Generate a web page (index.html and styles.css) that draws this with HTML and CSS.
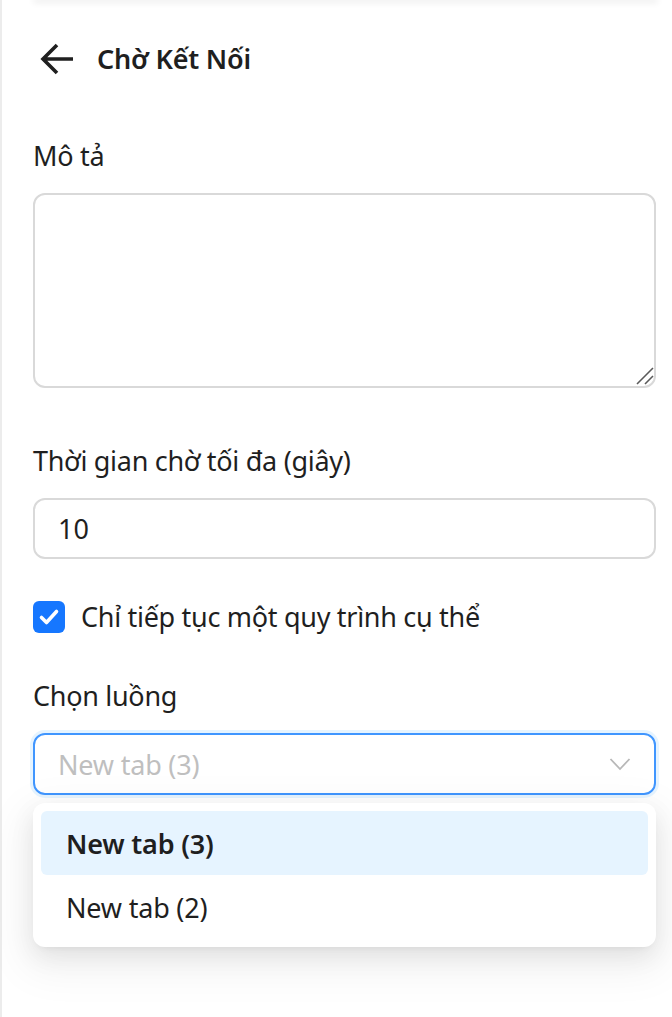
FILE: index.html
```html
<!DOCTYPE html>
<html lang="vi">
<head>
<meta charset="utf-8">
<title>Chờ Kết Nối</title>
<link rel="stylesheet" href="styles.css">
</head>
<body>
<div class="page">
  <div class="top-shadow"></div>
  <div class="header">
    <svg class="back" viewBox="0 0 34 32" width="34" height="32" aria-hidden="true">
      <path d="M33 16H3M17 2L3 16l14 14" fill="none" stroke="#1f1f1f" stroke-width="3.6" stroke-linecap="butt" stroke-linejoin="miter"/>
    </svg>
    <span class="title">Chờ Kết Nối</span>
  </div>

  <div class="field field-first">
    <div class="label">Mô tả</div>
    <div class="textarea-wrap">
      <textarea class="textarea"></textarea>
      <svg class="grip" viewBox="0 0 18 18" width="18" height="18" aria-hidden="true">
        <path d="M1 17L17 1M9 17l8-8" fill="none" stroke="#5a5a5a" stroke-width="1.6"/>
      </svg>
    </div>
  </div>

  <div class="field field-gap">
    <div class="label">Thời gian chờ tối đa (giây)</div>
    <div class="input">10</div>
  </div>

  <div class="check-row">
    <span class="checkbox">
      <svg viewBox="0 0 32 32" width="32" height="32" aria-hidden="true">
        <path d="M8.5 16.5l5 5 10-11" fill="none" stroke="#fff" stroke-width="3.6" stroke-linecap="round" stroke-linejoin="round"/>
      </svg>
    </span>
    <span class="check-label">Chỉ tiếp tục một quy trình cụ thể</span>
  </div>

  <div class="field field-select">
    <div class="label">Chọn luồng</div>
    <div class="select-wrap">
      <div class="select">
        <span class="placeholder">New tab (3)</span>
        <svg class="chev" viewBox="0 0 22 14" width="22" height="14" aria-hidden="true">
          <path d="M1.5 2l9.5 10 9.5-10" fill="none" stroke="#b8b8b8" stroke-width="1.8"/>
        </svg>
      </div>
      <div class="dropdown">
        <div class="option option-active">New tab (3)</div>
        <div class="option">New tab (2)</div>
      </div>
    </div>
  </div>
</div>
</body>
</html>
```

FILE: styles.css
```css
html, body {
  margin: 0;
  padding: 0;
  background: #ffffff;
}

body {
  font-family: "Noto Sans", "Open Sans", "Liberation Sans", sans-serif;
  color: #1f1f1f;
}

.page {
  display: flow-root;
  min-height: 1017px;
  border-left: 2px solid #ececec;
  padding: 0 16px 0 31px;
  box-sizing: border-box;
}

.top-shadow {
  height: 1px;
  margin-top: -1px;
  margin-left: 2px;
  background: #f3f3f3;
  box-shadow: 0 1px 6px 2px rgba(0, 0, 0, 0.07);
}

.header {
  display: flex;
  align-items: center;
  height: 36px;
  margin-top: 41px;
  padding-left: 7px;
  gap: 23px;
}

.back {
  display: block;
  flex: none;
}

.title {
  font-size: 27px;
  font-weight: 600;
  line-height: 36px;
  letter-spacing: -0.2px;
}

.field-first {
  margin-top: 61px;
}

.field-gap {
  margin-top: 55px;
}

.field-select {
  margin-top: 43px;
}

.label {
  font-size: 27px;
  line-height: 36px;
  margin-bottom: 19px;
  letter-spacing: -0.3px;
}

.textarea-wrap {
  position: relative;
}

.textarea {
  display: block;
  width: 100%;
  height: 195px;
  box-sizing: border-box;
  border: 2px solid #d9d9d9;
  border-radius: 12px;
  background: #fff;
  resize: none;
  margin: 0;
  font: inherit;
  outline: none;
}

.grip {
  position: absolute;
  right: 2px;
  bottom: 3px;
  display: block;
}

.input {
  height: 61px;
  box-sizing: border-box;
  border: 2px solid #d9d9d9;
  border-radius: 12px;
  padding: 0 23px;
  display: flex;
  align-items: center;
  font-size: 27px;
}

.check-row {
  display: flex;
  align-items: center;
  height: 36px;
  margin-top: 40px;
  gap: 16px;
}

.checkbox {
  width: 32px;
  height: 32px;
  border-radius: 6px;
  background: #1677ff;
  display: block;
  flex: none;
}

.checkbox svg {
  display: block;
}

.check-label {
  font-size: 27px;
  line-height: 36px;
  letter-spacing: -0.3px;
}

.select-wrap {
  position: relative;
}

.select {
  height: 62px;
  box-sizing: border-box;
  border: 2px solid #4096ff;
  border-radius: 12px;
  box-shadow: 0 0 0 3px rgba(5, 145, 255, 0.1);
  padding: 0 23px 0 23px;
  display: flex;
  align-items: center;
  justify-content: space-between;
}

.placeholder {
  font-size: 27px;
  color: #bfbfbf;
  letter-spacing: -0.2px;
}

.chev {
  display: block;
}

.dropdown {
  position: absolute;
  left: 0;
  right: 0;
  top: 70px;
  background: #fff;
  border-radius: 12px;
  padding: 8px;
  box-shadow: 0 9px 24px 0 rgba(0, 0, 0, 0.08),
              0 4px 9px -6px rgba(0, 0, 0, 0.12),
              0 14px 42px 12px rgba(0, 0, 0, 0.05);
}

.option {
  height: 64px;
  display: flex;
  align-items: center;
  padding: 0 25px;
  border-radius: 6px;
  font-size: 27px;
  letter-spacing: -0.2px;
}

.option-active {
  background: #e6f4ff;
  font-weight: 600;
}
```
